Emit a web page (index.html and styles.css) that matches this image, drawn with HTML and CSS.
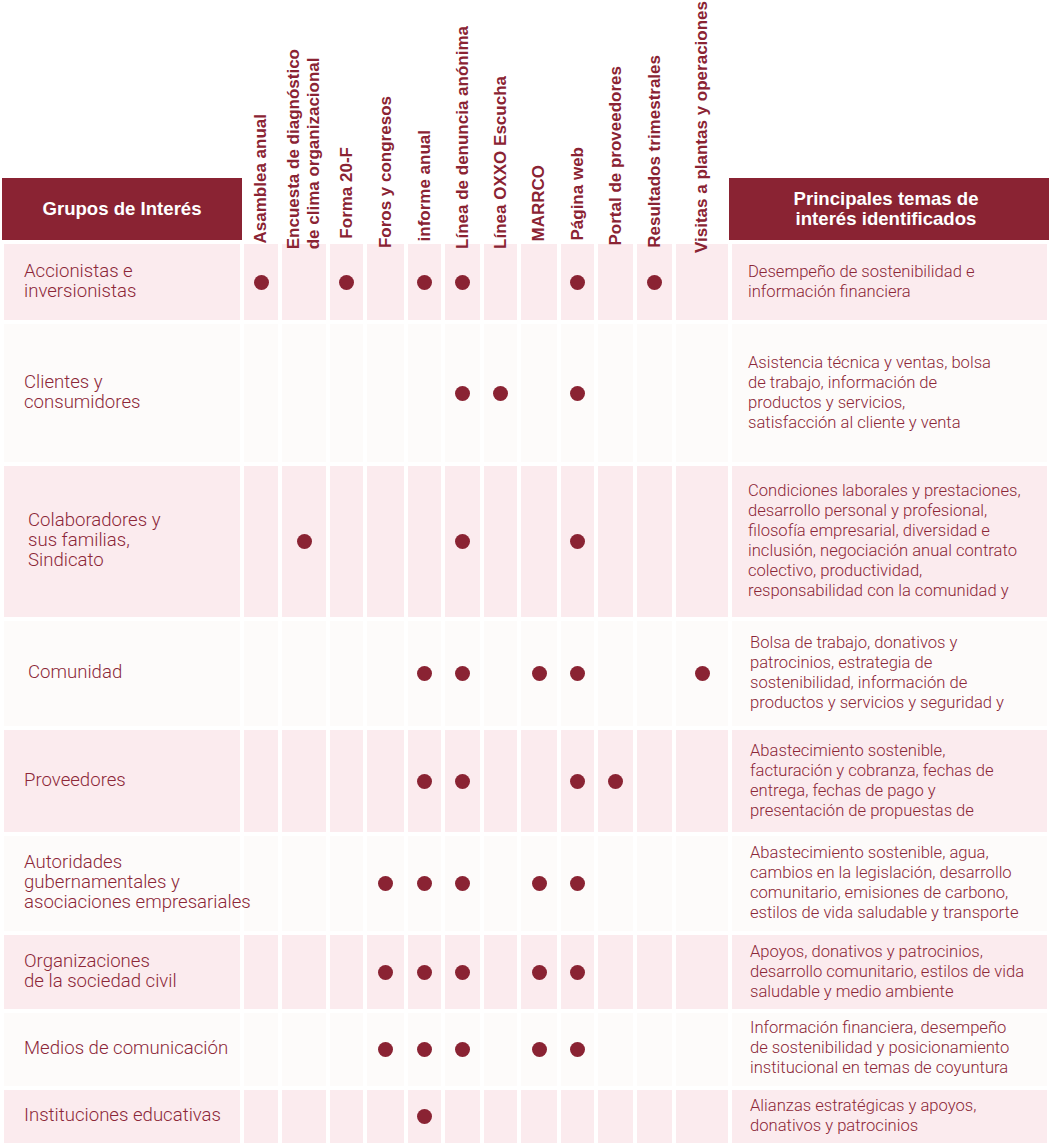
FILE: index.html
```html
<!DOCTYPE html>
<html lang="es">
<head>
<meta charset="utf-8">
<title>Grupos de Interés</title>
<link rel="stylesheet" href="styles.css">
</head>
<body>
<div class="table">
  <div class="row head">
    <div class="hbox groups">Grupos de Interés</div>
    <div class="vh"><span class="s2">Asamblea anual</span></div>
    <div class="vh"><span class="s8">Encuesta de diagnóstico<br>de clima organizacional</span></div>
    <div class="vh"><span class="u2">Forma 20-F</span></div>
    <div class="vh"><span class="s7">Foros y congresos</span></div>
    <div class="vh"><span class="s0">informe anual</span></div>
    <div class="vh"><span class="s8">Línea de denuncia anónima</span></div>
    <div class="vh"><span class="s8">Línea OXXO Escucha</span></div>
    <div class="vh"><span class="s0">MARRCO</span></div>
    <div class="vh"><span class="s0">Página web</span></div>
    <div class="vh"><span class="s5">Portal de proveedores</span></div>
    <div class="vh"><span class="s7">Resultados trimestrales</span></div>
    <div class="vh"><span class="s12">Visitas a plantas y operaciones</span></div>
    <div class="hbox topics">Principales temas de<br>interés identificados</div>
  </div>

  <div class="row pink">
    <div class="cell name">Accionistas e<br>inversionistas</div>
    <div class="cell"><i class="dot"></i></div>
    <div class="cell"></div>
    <div class="cell"><i class="dot"></i></div>
    <div class="cell"></div>
    <div class="cell"><i class="dot"></i></div>
    <div class="cell"><i class="dot"></i></div>
    <div class="cell"></div>
    <div class="cell"></div>
    <div class="cell"><i class="dot"></i></div>
    <div class="cell"></div>
    <div class="cell"><i class="dot"></i></div>
    <div class="cell"></div>
    <div class="cell topic">Desempeño de sostenibilidad e<br>información financiera</div>
  </div>

  <div class="row white">
    <div class="cell name">Clientes y<br>consumidores</div>
    <div class="cell"></div>
    <div class="cell"></div>
    <div class="cell"></div>
    <div class="cell"></div>
    <div class="cell"></div>
    <div class="cell"><i class="dot"></i></div>
    <div class="cell"><i class="dot"></i></div>
    <div class="cell"></div>
    <div class="cell"><i class="dot"></i></div>
    <div class="cell"></div>
    <div class="cell"></div>
    <div class="cell"></div>
    <div class="cell topic">Asistencia técnica y ventas, bolsa<br>de trabajo, información de<br>productos y servicios,<br>satisfacción al cliente y venta</div>
  </div>

  <div class="row pink">
    <div class="cell name ind">Colaboradores y<br>sus familias,<br>Sindicato</div>
    <div class="cell"></div>
    <div class="cell"><i class="dot"></i></div>
    <div class="cell"></div>
    <div class="cell"></div>
    <div class="cell"></div>
    <div class="cell"><i class="dot"></i></div>
    <div class="cell"></div>
    <div class="cell"></div>
    <div class="cell"><i class="dot"></i></div>
    <div class="cell"></div>
    <div class="cell"></div>
    <div class="cell"></div>
    <div class="cell topic">Condiciones laborales y prestaciones,<br>desarrollo personal y profesional,<br>filosofía empresarial, diversidad e<br>inclusión, negociación anual contrato<br>colectivo, productividad,<br>responsabilidad con la comunidad y</div>
  </div>

  <div class="row white">
    <div class="cell name ind">Comunidad</div>
    <div class="cell"></div>
    <div class="cell"></div>
    <div class="cell"></div>
    <div class="cell"></div>
    <div class="cell"><i class="dot"></i></div>
    <div class="cell"><i class="dot"></i></div>
    <div class="cell"></div>
    <div class="cell"><i class="dot"></i></div>
    <div class="cell"><i class="dot"></i></div>
    <div class="cell"></div>
    <div class="cell"></div>
    <div class="cell"><i class="dot"></i></div>
    <div class="cell topic wide">Bolsa de trabajo, donativos y<br>patrocinios, estrategia de<br>sostenibilidad, información de<br>productos y servicios y seguridad y</div>
  </div>

  <div class="row pink">
    <div class="cell name">Proveedores</div>
    <div class="cell"></div>
    <div class="cell"></div>
    <div class="cell"></div>
    <div class="cell"></div>
    <div class="cell"><i class="dot"></i></div>
    <div class="cell"><i class="dot"></i></div>
    <div class="cell"></div>
    <div class="cell"></div>
    <div class="cell"><i class="dot"></i></div>
    <div class="cell"><i class="dot"></i></div>
    <div class="cell"></div>
    <div class="cell"></div>
    <div class="cell topic wide">Abastecimiento sostenible,<br>facturación y cobranza, fechas de<br>entrega, fechas de pago y<br>presentación de propuestas de</div>
  </div>

  <div class="row white">
    <div class="cell name over">Autoridades<br>gubernamentales y<br>asociaciones empresariales</div>
    <div class="cell"></div>
    <div class="cell"></div>
    <div class="cell"></div>
    <div class="cell"><i class="dot"></i></div>
    <div class="cell"><i class="dot"></i></div>
    <div class="cell"><i class="dot"></i></div>
    <div class="cell"></div>
    <div class="cell"><i class="dot"></i></div>
    <div class="cell"><i class="dot"></i></div>
    <div class="cell"></div>
    <div class="cell"></div>
    <div class="cell"></div>
    <div class="cell topic wide">Abastecimiento sostenible, agua,<br>cambios en la legislación, desarrollo<br>comunitario, emisiones de carbono,<br>estilos de vida saludable y transporte</div>
  </div>

  <div class="row pink">
    <div class="cell name">Organizaciones<br>de la sociedad civil</div>
    <div class="cell"></div>
    <div class="cell"></div>
    <div class="cell"></div>
    <div class="cell"><i class="dot"></i></div>
    <div class="cell"><i class="dot"></i></div>
    <div class="cell"><i class="dot"></i></div>
    <div class="cell"></div>
    <div class="cell"><i class="dot"></i></div>
    <div class="cell"><i class="dot"></i></div>
    <div class="cell"></div>
    <div class="cell"></div>
    <div class="cell"></div>
    <div class="cell topic wide">Apoyos, donativos y patrocinios,<br>desarrollo comunitario, estilos de vida<br>saludable y medio ambiente</div>
  </div>

  <div class="row white">
    <div class="cell name">Medios de comunicación</div>
    <div class="cell"></div>
    <div class="cell"></div>
    <div class="cell"></div>
    <div class="cell"><i class="dot"></i></div>
    <div class="cell"><i class="dot"></i></div>
    <div class="cell"><i class="dot"></i></div>
    <div class="cell"></div>
    <div class="cell"><i class="dot"></i></div>
    <div class="cell"><i class="dot"></i></div>
    <div class="cell"></div>
    <div class="cell"></div>
    <div class="cell"></div>
    <div class="cell topic wide up">Información financiera, desempeño<br>de sostenibilidad y posicionamiento<br>institucional en temas de coyuntura</div>
  </div>

  <div class="row pink">
    <div class="cell name">Instituciones educativas</div>
    <div class="cell"></div>
    <div class="cell"></div>
    <div class="cell"></div>
    <div class="cell"></div>
    <div class="cell"><i class="dot"></i></div>
    <div class="cell"></div>
    <div class="cell"></div>
    <div class="cell"></div>
    <div class="cell"></div>
    <div class="cell"></div>
    <div class="cell"></div>
    <div class="cell"></div>
    <div class="cell topic wide">Alianzas estratégicas y apoyos,<br>donativos y patrocinios</div>
  </div>
</div>
</body>
</html>
```

FILE: styles.css
```css
* {
  box-sizing: border-box;
  margin: 0;
  padding: 0;
}

html, body {
  background: #ffffff;
}

body {
  margin: 0;
  width: 1051px;
  overflow: hidden;
}

.table {
  display: grid;
  grid-template-columns: 236px 34px 44px 33px 37px 33px 35px 33px 36px 33px 35px 35px 52px 315px;
  grid-template-rows: 240px 76px 138px 151px 105px 102px 95px 74px 73px 53px;
  column-gap: 4px;
  row-gap: 4px;
  padding-left: 4px;
}

.row {
  display: contents;
}

.hbox {
  align-self: end;
  height: 62px;
  background: #8a2333;
  color: #ffffff;
  font-family: "Liberation Sans", Arial, sans-serif;
  font-weight: 700;
  font-size: 18.6px;
  line-height: 20px;
  display: flex;
  align-items: center;
  justify-content: center;
  text-align: center;
}

.hbox.groups {
  margin: 0 -2px;
}

.hbox.topics {
  margin: 0 -2px 0 -3px;
  padding-right: 6px;
}

.vh {
  display: flex;
  justify-content: center;
  align-items: flex-end;
  position: relative;
  z-index: 1;
}

.vh span {
  writing-mode: vertical-rl;
  transform: rotate(180deg);
  font-family: "Liberation Sans", Arial, sans-serif;
  font-weight: 700;
  font-size: 17px;
  line-height: 20px;
  color: #8a2333;
  white-space: nowrap;
}

.vh .s0 { margin-bottom: -1px; }
.vh .s2 { margin-bottom: -3px; }
.vh .s5 { margin-bottom: -6px; }
.vh .s7 { margin-bottom: -8px; }
.vh .s8 { margin-bottom: -9px; }
.vh .s12 { margin-bottom: -13px; }
.vh .u2 { margin-bottom: 1px; }

.cell {
  display: flex;
  align-items: center;
  justify-content: center;
  overflow: hidden;
}

.pink .cell {
  background: #fbebee;
}

.white .cell {
  background: #fdfbfa;
}

.cell.name {
  justify-content: flex-start;
  padding-left: 20px;
  padding-bottom: 3px;
  font-family: Roboto, "Liberation Sans", Arial, sans-serif;
  font-weight: 300;
  font-size: 18.6px;
  line-height: 20px;
  color: #8c2738;
  white-space: nowrap;
}

.cell.name.over {
  overflow: visible;
  position: relative;
  z-index: 1;
}

.cell.name.ind {
  padding-left: 24px;
}

.cell.topic {
  justify-content: flex-start;
  padding-left: 16px;
  padding-bottom: 1px;
  font-family: Roboto, "Liberation Sans", Arial, sans-serif;
  font-weight: 300;
  font-size: 16.6px;
  line-height: 20px;
  color: #8c2738;
  white-space: nowrap;
}

.cell.topic.wide {
  padding-left: 18px;
}

.cell.topic.up {
  padding-bottom: 4px;
}

.dot {
  display: block;
  width: 15px;
  height: 15px;
  border-radius: 50%;
  background: #8a2333;
}
```
